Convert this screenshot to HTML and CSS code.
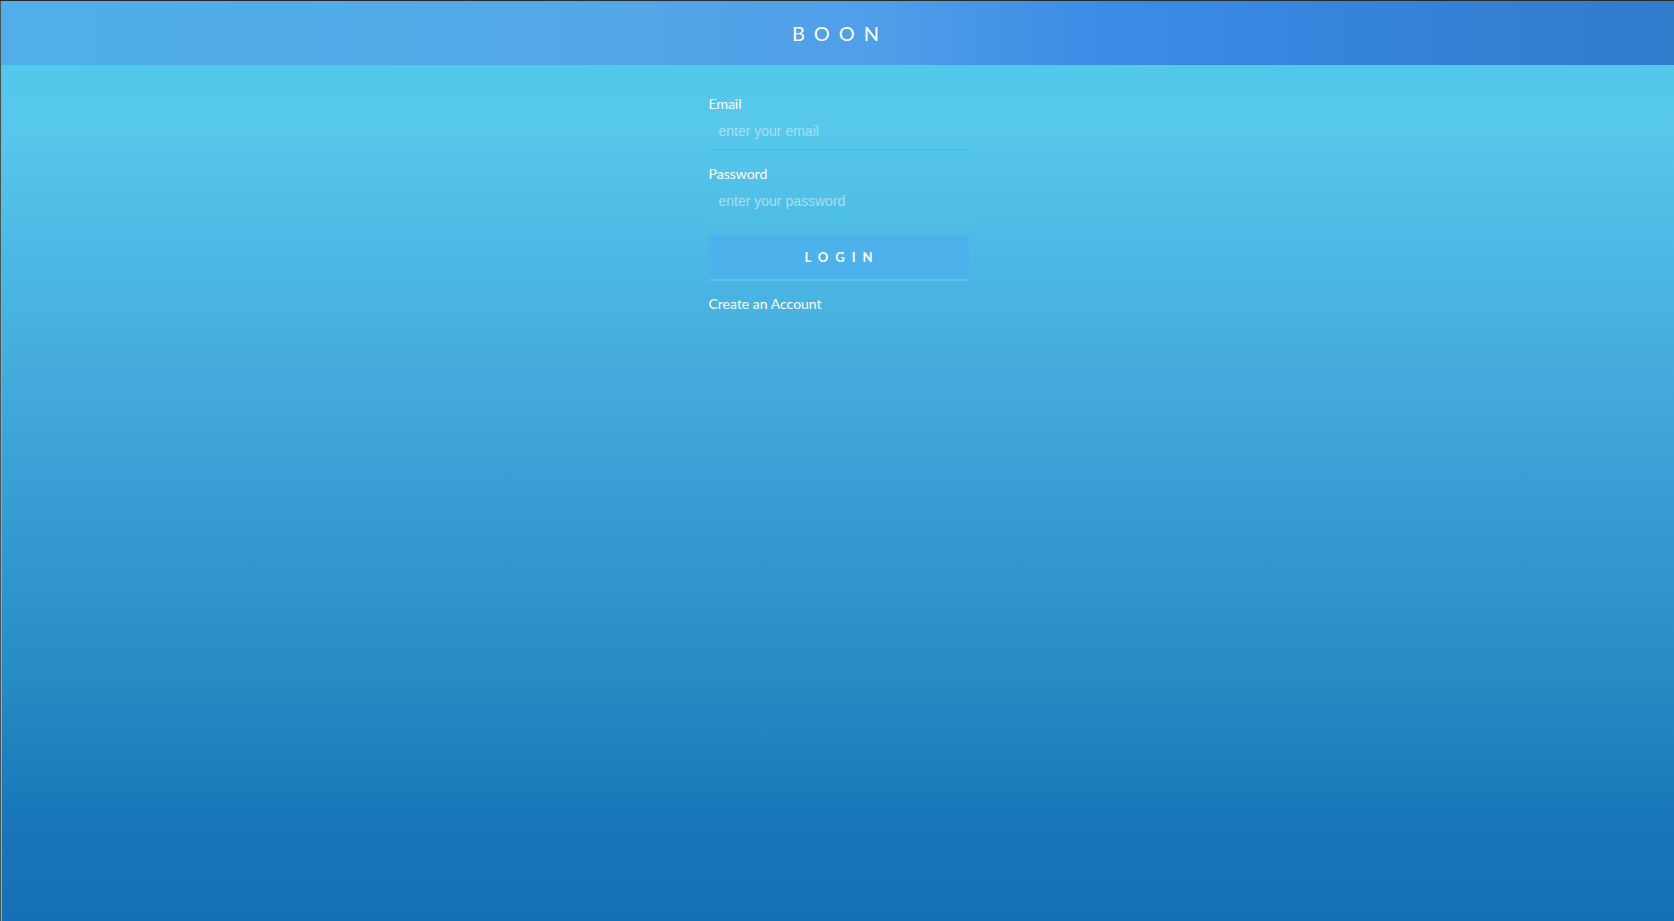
FILE: index.html
```html
<!DOCTYPE html>
<html>
<head>
<meta charset="utf-8">
<title>Boon</title>
<link rel="stylesheet" href="styles.css">
</head>
<body>
<div class="page">
  <header class="topbar">
    <div class="brand">BOON</div>
  </header>
  <main class="content">
    <form class="login-form">
      <label class="field-label" for="email">Email</label>
      <input class="field-input" id="email" type="text" placeholder="enter your email">
      <label class="field-label" for="password">Password</label>
      <input class="field-input" id="password" type="password" placeholder="enter your password">
      <button class="login-btn" type="button">LOGIN</button>
      <a class="create-link" href="#">Create an Account</a>
    </form>
  </main>
</div>
</body>
</html>
```
FILE: styles.css
```css
html, body {
  margin: 0;
  padding: 0;
  height: 100%;
}
body {
  font-family: Lato, "Liberation Sans", sans-serif;
  background: #2a2a2a;
}
.page {
  height: 920px;
  margin-top: 1px;
  border-left: 1px solid #4d5550;
  display: flex;
  flex-direction: column;
  background: linear-gradient(to bottom, #4ec8e8 0px, #57c8ec 130px, #4bb8e4 260px, #44aadb 380px, #3399d0 540px, #278bc6 680px, #1a79ba 800px, #1470b4 920px);
  box-shadow: inset 1px 0 0 #a3ae68;
}
.topbar {
  height: 64px;
  flex: none;
  display: flex;
  align-items: center;
  justify-content: center;
  background: linear-gradient(to right, #50aeea 0%, #53a8e9 35%, #4f9fe8 52%, #3b8ce6 66%, #3585dd 80%, #317bcb 100%);
}
.brand {
  color: #ffffff;
  font-family: Lato, "Liberation Sans", sans-serif;
  font-size: 20px;
  letter-spacing: 9px;
  padding-left: 9px;
  margin-left: -4px;
}
.content {
  flex: 1;
  display: flex;
  justify-content: center;
  padding-top: 30px;
}
.login-form {
  width: 260px;
  margin-left: 2px;
  display: flex;
  flex-direction: column;
}
.field-label {
  color: #ffffff;
  font-size: 14px;
  line-height: 18px;
  height: 18px;
}
.field-input {
  height: 36px;
  margin-bottom: 14px;
  padding: 0 10px;
  border: none;
  border-bottom: 2px solid #44c3e6;
  background: transparent;
  outline: none;
  color: #ffffff;
  font-family: "Liberation Sans", Arial, sans-serif;
  font-size: 14px;
}
.field-input::placeholder {
  color: #a8def2;
}
.login-btn {
  height: 46px;
  margin-top: 0;
  border: none;
  border-bottom: 2px solid #52c6ea;
  background: #4db1eb;
  color: #ffffff;
  font-family: Lato, "Liberation Sans", sans-serif;
  font-weight: 700;
  font-size: 13px;
  letter-spacing: 7px;
  padding: 0 0 0 7px;
  cursor: pointer;
}
.create-link {
  margin-top: 14px;
  color: #ffffff;
  font-size: 14px;
  line-height: 18px;
  text-decoration: none;
}
```
